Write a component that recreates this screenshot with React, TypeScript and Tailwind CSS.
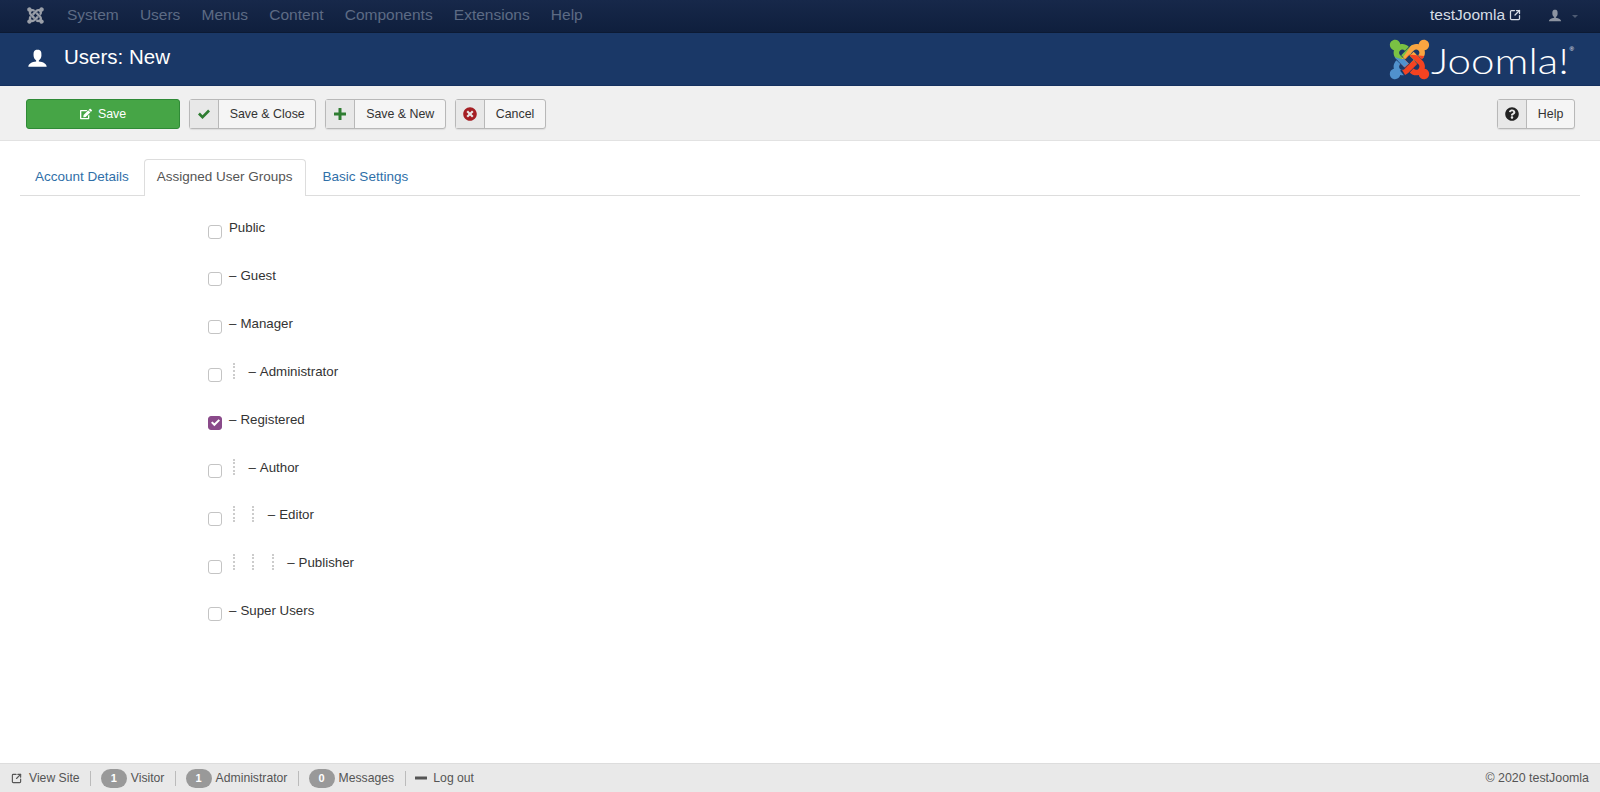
import { FaJoomla, FaEdit, FaTimesCircle, FaQuestionCircle } from "react-icons/fa";
import { ImUser, ImCheckmark, ImPlus, ImMinus } from "react-icons/im";
import { SquareArrowOutUpRight } from "lucide-react";

const navItems = ["System", "Users", "Menus", "Content", "Components", "Extensions", "Help"];

const groups = [
  { name: "Public", depth: -1 },
  { name: "Guest", depth: 0 },
  { name: "Manager", depth: 0 },
  { name: "Administrator", depth: 1 },
  { name: "Registered", depth: 0, checked: true },
  { name: "Author", depth: 1 },
  { name: "Editor", depth: 2 },
  { name: "Publisher", depth: 3 },
  { name: "Super Users", depth: 0 },
];

function ToolbarButton({ icon, label }: { icon: React.ReactNode; label: string }) {
  return (
    <button className="flex h-[30px] items-stretch rounded-[3px] border border-[#b8b8b8] bg-[#f5f5f5] text-[12.4px] text-[#333] shadow-[0_1px_1px_rgba(0,0,0,0.08)]">
      <span className="flex w-[29px] items-center justify-center border-r border-[#b8b8b8] bg-[#e8e8e8]">{icon}</span>
      <span className="px-[10.7px] leading-[28px]">{label}</span>
    </button>
  );
}

function Badge({ count }: { count: number }) {
  return (
    <span className="mr-[4px] flex h-[19px] w-[26px] items-center justify-center rounded-full bg-[#999] text-[11px] font-bold text-white">
      {count}
    </span>
  );
}

function Separator() {
  return <span className="ml-[10.5px] mr-[9.7px] h-[15px] w-px bg-[#bbb]" />;
}

function Logo() {
  return (
    <div className="flex items-center">
      <div className="relative h-[45px] w-[45px]">
        <FaJoomla className="absolute inset-0 h-full w-full text-[#7ac143] [clip-path:polygon(0_0,68%_0,50%_32%,72%_62%,50%_50%,18%_50%,0_40%)]" />
        <FaJoomla className="absolute inset-0 h-full w-full text-[#f9a541] [clip-path:polygon(68%_0,100%_0,100%_45%,72%_50%,50%_62%,34%_50%)]" />
        <FaJoomla className="absolute inset-0 h-full w-full text-[#f44321] [clip-path:polygon(100%_45%,100%_100%,50%_100%,28%_64%,50%_40%)]" />
        <FaJoomla className="absolute inset-0 h-full w-full text-[#5091cd] [clip-path:polygon(0_40%,32%_50%,62%_50%,30%_76%,50%_100%,0_100%)]" />
      </div>
      <span className="ml-[-1px] mt-[2px] w-[137px] origin-left scale-x-[1.17] font-['Lato'] text-[36px] font-light leading-none text-white">Joomla!</span>
      <span className="mb-[20px] ml-[2px] text-[6px] text-white">®</span>
    </div>
  );
}

export default function App() {
  return (
    <div className="flex h-screen flex-col overflow-hidden bg-white font-['Liberation_Sans',Arial,sans-serif] text-[#333]">
      <nav className="flex h-[33px] shrink-0 items-center border-b border-[#0c1a33] bg-gradient-to-b from-[#17284a] to-[#0f1f3d] pb-[2px] pl-[26px] pr-[22px]">
        <FaJoomla className="h-[19px] w-[19px] text-[#9a9fa8]" />
        <ul className="ml-[22px] flex gap-[21.2px] text-[15.5px] text-[#5d6b84]">
          {navItems.map((item) => (
            <li key={item}>{item}</li>
          ))}
        </ul>
        <div className="ml-auto flex items-center text-[15.5px] text-[#d7dde6]">
          testJoomla
          <SquareArrowOutUpRight className="ml-[4px] h-[12px] w-[12px]" strokeWidth={2.5} />
          <ImUser className="ml-[27px] h-[14px] w-[14px] text-[#8d94a1]" />
          <span className="ml-[10px] mt-[3px] border-x-[3px] border-t-[3px] border-x-transparent border-t-[#4d5a72]" />
        </div>
      </nav>

      <header className="flex h-[53px] shrink-0 items-center border-b border-[#14305f] bg-[#1a3867] pl-[27px] pr-[26px] text-white">
        <ImUser className="mb-[4px] h-[21px] w-[21px]" />
        <h1 className="mb-[4px] ml-[16px] text-[20.5px] font-normal">Users: New</h1>
        <div className="ml-auto">
          <Logo />
        </div>
      </header>

      <div className="flex h-[55px] shrink-0 items-center gap-[9px] border-b border-[#e2e2e2] bg-[#f0f0f0] pl-[26px] pr-[25px] pt-[2px]">
        <button className="flex h-[30px] w-[154px] items-center justify-center gap-[6px] rounded-[3px] border border-[#2f8a36] bg-[#46a546] text-[12.4px] text-white">
          <FaEdit className="h-[12px] w-[12px]" />
          Save
        </button>
        <ToolbarButton icon={<ImCheckmark className="h-[12px] w-[12px] text-[#2f7d32]" />} label="Save & Close" />
        <ToolbarButton icon={<ImPlus className="h-[12px] w-[12px] text-[#2f7d32]" />} label="Save & New" />
        <ToolbarButton icon={<FaTimesCircle className="h-[14px] w-[14px] text-[#a51f24]" />} label="Cancel" />
        <div className="ml-auto">
          <ToolbarButton icon={<FaQuestionCircle className="h-[14px] w-[14px] text-[#222]" />} label="Help" />
        </div>
      </div>

      <main className="min-h-0 flex-1 px-[20px] pt-[18px]">
        <div className="flex h-[37px] border-b border-[#ddd] text-[13.5px]">
          <span className="pl-[15px] pr-[15px] pt-[8px] text-[#2f6fa8]">Account Details</span>
          <span className="-mb-px h-[37px] rounded-t-[4px] border border-b-0 border-[#ddd] bg-white px-[12px] pt-[7px] text-[#555]">Assigned User Groups</span>
          <span className="pl-[17px] pr-[16px] pt-[8px] text-[#2f6fa8]">Basic Settings</span>
        </div>
        <ul className="pl-[188px] pt-[14px] text-[13.3px] text-[#333]">
          {groups.map((group) => (
            <li key={group.name} className="flex h-[47.85px] items-start">
              <span className={`mt-[14.6px] flex h-[14px] w-[14px] shrink-0 items-center justify-center rounded-[3px] border ${group.checked ? "border-[#8a4a8a] bg-[#8a4a8a]" : "border-[#c4c4c4] bg-white"}`}>
                {group.checked && <ImCheckmark className="h-[9px] w-[9px] text-white" />}
              </span>
              <span className="ml-[7px] flex pt-[9.3px] leading-[17px]">
                {Array.from({ length: Math.max(group.depth, 0) }).map((_, i) => (
                  <span key={i} className="ml-[4px] mr-[13.4px] h-[16px] w-0 border-l-2 border-dotted border-[#ccc]" />
                ))}
                {group.depth >= 0 && <span className="mr-[4px]">–</span>}
                {group.name}
              </span>
            </li>
          ))}
        </ul>
      </main>

      <footer className="flex h-[29px] shrink-0 items-center border-t border-[#ddd] bg-[#e9e9e9] pl-[11px] pr-[11px] text-[12.2px] text-[#555]">
        <SquareArrowOutUpRight className="mr-[7px] h-[11px] w-[11px]" strokeWidth={2.5} />
        View Site
        <Separator />
        <Badge count={1} />
        Visitor
        <Separator />
        <Badge count={1} />
        Administrator
        <Separator />
        <Badge count={0} />
        Messages
        <Separator />
        <ImMinus className="mr-[6px] h-[12px] w-[12px]" />
        Log out
        <span className="ml-auto text-[12.4px]">© 2020 testJoomla</span>
      </footer>
    </div>
  );
}
